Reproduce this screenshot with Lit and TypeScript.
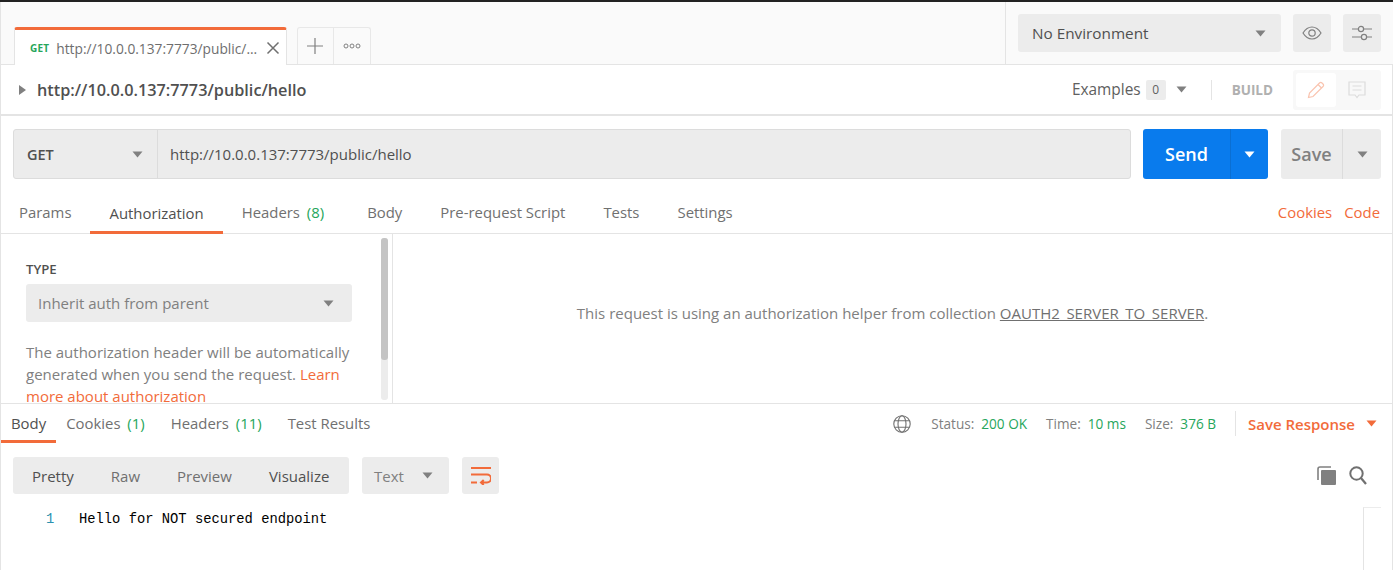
import { LitElement, html, css, svg } from 'lit';
import { customElement } from 'lit/decorators.js';

const caret = (color = '#808080') => html`<svg class="caret" width="11" height="7" viewBox="0 0 11 7"><path d="M0.5 0.5h10L5.5 6.5z" fill=${color}></path></svg>`;

const eyeIcon = svg`<path d="M1 9c2.6-4.2 5.6-6 9-6s6.400 1.800 9 6c-2.600 4.200-5.600 6-9 6s-6.400-1.800-9-6z" fill="none" stroke="#808080" stroke-width="1.200"></path><circle cx="10" cy="9" r="3.200" fill="none" stroke="#808080" stroke-width="1.200"></circle>`;

const slidersIcon = svg`<path d="M0 5h6M12 5h8M0 13h9M15 13h5" stroke="#808080" stroke-width="1.200" fill="none"></path><circle cx="9" cy="5" r="2.600" fill="none" stroke="#808080" stroke-width="1.200"></circle><circle cx="12" cy="13" r="2.600" fill="none" stroke="#808080" stroke-width="1.200"></circle>`;

@customElement('app-root')
export class AppRoot extends LitElement {
  static styles = css`
    :host {
      display: block;
      width: 1393px;
      height: 570px;
      overflow: hidden;
      background: #fff;
      color: #505050;
      font-family: 'Open Sans', sans-serif;
      font-size: 15px;
      box-sizing: border-box;
    }

    * {
      box-sizing: border-box;
    }

    .caret {
      display: block;
      flex: none;
    }

    .topbar {
      height: 2px;
      background: #222;
    }

    .page {
      height: 568px;
      border-left: 1px solid #e4e4e4;
      border-right: 1px solid #e4e4e4;
    }

    /* tab strip */
    .strip {
      display: flex;
      height: 63px;
      margin-right: -1px;
      background: #fafafa;
      border-bottom: 1px solid #e4e4e4;
    }

    .strip-left {
      flex: 1;
      display: flex;
      align-items: flex-end;
      padding-left: 13px;
      margin-bottom: -1px;
    }

    .req-tab {
      display: flex;
      align-items: center;
      width: 273px;
      height: 38px;
      padding: 1px 6px 0 15px;
      background: #fff;
      border: 1px solid #e4e4e4;
      border-top: 3px solid #f26b3a;
      border-bottom: none;
      border-radius: 3px 3px 0 0;
      color: #6e6e6e;
    }

    .req-tab .method {
      font-size: 10px;
      font-weight: 700;
      color: #26a65b;
      margin-right: 7px;
      letter-spacing: 0.2px;
    }

    .req-tab .title {
      font-size: 13.75px;
      flex: 1;
      white-space: nowrap;
    }

    .strip-btns {
      display: flex;
      height: 37px;
      margin-left: 10px;
      margin-bottom: 1px;
      background: #fafafa;
      border: 1px solid #e8e8e8;
      border-bottom: none;
      border-radius: 3px 3px 0 0;
    }

    .strip-btns div {
      width: 35px;
      padding-right: 1px;
      display: flex;
      align-items: center;
      justify-content: center;
    }

    .strip-btns div + div {
      width: 37px;
      padding-right: 0;
      border-left: 1px solid #e8e8e8;
    }

    .env {
      width: 388px;
      flex: none;
      display: flex;
      gap: 12px;
      padding: 12px 11px 0 12px;
      border-left: 1px solid #e4e4e4;
    }

    .env-select {
      width: 263px;
      height: 38px;
      display: flex;
      align-items: center;
      justify-content: space-between;
      padding: 0 15px 0 14px;
      background: #ececec;
      border-radius: 3px;
      font-size: 15.3px;
      font-weight: 500;
      color: #505050;
    }

    .env-btn {
      width: 38px;
      height: 38px;
      display: flex;
      align-items: center;
      justify-content: center;
      background: #ececec;
      border-radius: 3px;
    }

    /* request name row */
    .name-row {
      display: flex;
      align-items: center;
      height: 51px;
      border-bottom: 2px solid #e4e4e4;
      padding: 0 11px 0 18px;
    }

    .name-row .arrow {
      width: 0;
      height: 0;
      border-left: 7px solid #808080;
      border-top: 5px solid transparent;
      border-bottom: 5px solid transparent;
      margin-right: 11px;
    }

    .name-row .name {
      flex: 1;
      font-size: 16.25px;
      font-weight: 600;
      color: #505050;
    }

    .examples {
      display: flex;
      align-items: center;
      font-size: 15.4px;
      font-weight: 500;
      color: #606060;
    }

    .examples .count {
      width: 20px;
      height: 20px;
      margin: 0 10px 0 5px;
      background: #ececec;
      border-radius: 2px;
      font-size: 12px;
      line-height: 20px;
      text-align: center;
    }

    .name-row .sep {
      width: 1px;
      height: 20px;
      background: #e4e4e4;
      margin: 0 20px 0 24px;
    }

    .build {
      font-size: 13.5px;
      font-weight: 700;
      color: #b0b0b0;
      margin-right: 20px;
    }

    .mode {
      display: flex;
      padding: 3px;
      width: 88px;
      height: 40px;
      background: #f8f8f8;
      border-radius: 3px;
    }

    .mode div {
      width: 40px;
      display: flex;
      align-items: center;
      justify-content: center;
      border-radius: 3px;
    }

    .mode div + div {
      width: 42px;
    }

    .mode .on {
      background: #fff;
    }

    /* url bar */
    .url-row {
      display: flex;
      padding: 13px 11px 0 12px;
    }

    .url-group {
      flex: 1;
      height: 50px;
      display: flex;
      background: #ececec;
      border: 1px solid #dcdcdc;
      border-radius: 3px;
    }

    .method-select {
      width: 144px;
      display: flex;
      align-items: center;
      justify-content: space-between;
      padding: 0 14px 0 13px;
      border-right: 1px solid #dcdcdc;
      font-size: 14.5px;
      font-weight: 600;
      color: #505050;
    }

    .url {
      display: flex;
      align-items: center;
      padding-left: 12px;
      color: #505050;
    }

    .send {
      display: flex;
      width: 125px;
      height: 50px;
      margin-left: 12px;
      background: #097bed;
      border-radius: 3px;
      color: #fff;
      font-size: 18px;
      font-weight: 600;
    }

    .save {
      display: flex;
      width: 100px;
      height: 50px;
      margin-left: 13px;
      background: #ececec;
      border-radius: 3px;
      color: #808080;
      font-size: 18px;
      font-weight: 600;
    }

    .split-main {
      flex: 1;
      display: flex;
      align-items: center;
      justify-content: center;
    }

    .split-arrow {
      display: flex;
      align-items: center;
      justify-content: center;
      flex: none;
      width: 38px;
      border-left: 1px solid #0a6fd3;
    }

    .save .split-arrow {
      width: 39px;
      border-left-color: #dcdcdc;
    }

    /* tabs */
    .req-tabs {
      display: flex;
      align-items: flex-end;
      height: 55px;
      margin-left: -1px;
      font-size: 14.9px;
      border-bottom: 1px solid #e4e4e4;
    }

    .tab {
      height: 36px;
      padding: 0 19px;
      color: #707070;
      line-height: 30px;
      white-space: nowrap;
    }

    .tab.active {
      color: #505050;
      border-bottom: 3px solid #f26b3a;
      margin-bottom: -1px;
    }

    .count-green {
      color: #26a65b;
      margin-left: 3px;
    }

    .tab.headers {
      margin-right: 5px;
    }

    .req-tabs .links {
      margin-left: auto;
      display: flex;
      gap: 12px;
      height: 36px;
      line-height: 30px;
      padding-right: 12px;
      color: #f26b3a;
    }

    /* auth pane */
    .auth {
      display: flex;
      height: 170px;
      border-bottom: 1px solid #e4e4e4;
    }

    .auth-left {
      position: relative;
      width: 392px;
      flex: none;
      padding: 27px 39px 0 25px;
      border-right: 1px solid #e4e4e4;
      overflow: hidden;
    }

    .auth-left .type {
      font-size: 13.2px;
      font-weight: 600;
      line-height: 16px;
      color: #505050;
    }

    .auth-select {
      display: flex;
      align-items: center;
      justify-content: space-between;
      width: 326px;
      height: 38px;
      margin-top: 7px;
      padding: 0 18px 0 12px;
      background: #ececec;
      border-radius: 3px;
      color: #808080;
    }

    .auth-left p {
      width: 335px;
      margin: 19px 0 0;
      line-height: 22px;
      color: #808080;
    }

    .link {
      color: #f26b3a;
    }

    .scroll {
      position: absolute;
      top: 4px;
      right: 4px;
      width: 7px;
      height: 162px;
      background: #ececec;
      border-radius: 3px;
    }

    .scroll div {
      height: 122px;
      background: #c4c4c4;
      border-radius: 3px;
    }

    .auth-right {
      flex: 1;
      display: flex;
      align-items: center;
      justify-content: center;
      color: #808080;
      padding: 0 0 12px 0;
    }

    .auth-right u {
      color: #707070;
    }

    /* response */
    .res-head {
      display: flex;
      height: 39px;
      font-size: 14.9px;
    }

    .res-tab {
      height: 39px;
      padding: 0 10px;
      line-height: 39px;
      color: #707070;
      white-space: nowrap;
    }

    .res-tab.active {
      color: #505050;
      border-bottom: 3px solid #f26b3a;
    }

    .res-tab.gap {
      margin-right: 6px;
    }

    .res-meta {
      margin-left: auto;
      display: flex;
      align-items: center;
      height: 39px;
      font-size: 13.6px;
      color: #808080;
      padding-right: 15px;
    }

    .res-meta .val {
      color: #26a65b;
      margin: 0 19px 0 7px;
    }

    .res-meta .globe {
      margin-right: 20px;
    }

    .res-meta .sep {
      width: 1px;
      height: 25px;
      background: #e4e4e4;
      margin-right: 12px;
    }

    .res-meta .save-res {
      font-size: 15px;
      font-weight: 600;
      color: #f26b3a;
      margin-right: 11px;
    }

    .toolbar {
      display: flex;
      align-items: center;
      padding: 14px 12px 0 12px;
    }

    .modes {
      display: flex;
      align-items: center;
      gap: 37px;
      height: 37px;
      padding: 0 18px 0 19px;
      width: 336px;
      background: #ececec;
      border-radius: 3px;
      color: #707070;
    }

    .modes .active {
      color: #505050;
    }

    .text-select {
      display: flex;
      align-items: center;
      justify-content: space-between;
      width: 87px;
      height: 37px;
      margin-left: 13px;
      padding: 0 16px 0 12px;
      background: #ececec;
      border-radius: 3px;
      color: #808080;
    }

    .wrap {
      display: flex;
      align-items: center;
      justify-content: center;
      width: 37px;
      height: 37px;
      margin-left: 13px;
      background: #ececec;
      border-radius: 3px;
    }

    .tools {
      margin-left: auto;
      display: flex;
      gap: 13px;
      padding-right: 13px;
    }

    .editor {
      display: flex;
      padding-top: 13px;
      font-family: 'Liberation Mono', monospace;
      font-size: 13.8px;
      line-height: 22px;
      color: #000;
    }

    .editor .ln {
      width: 78px;
      padding: 2px 0 0 45px;
      color: #2b91af;
      flex: none;
    }

    .editor .code {
      padding-top: 2px;
    }

    .editor .gutter {
      margin-left: auto;
      margin-right: 11px;
      width: 18px;
      height: 70px;
      border-left: 1px solid #e4e4e4;
      border-top: 1px solid #ececec;
    }
  `;

  render() {
    return html`
      <div class="topbar"></div>
      <div class="page">
        <div class="strip">
          <div class="strip-left">
            <div class="req-tab">
              <span class="method">GET</span>
              <span class="title">http://10.0.0.137:7773/public/...</span>
              <svg width="14" height="14" viewBox="0 0 14 14"><path d="M1.500 1.500l11 11M12.500 1.500l-11 11" stroke="#707070" stroke-width="1.500" fill="none"></path></svg>
            </div>
            <div class="strip-btns">
              <div><svg width="16" height="16" viewBox="0 0 16 16"><path d="M8 0v16M0 8h16" stroke="#808080" stroke-width="1.200" fill="none"></path></svg></div>
              <div><svg width="18" height="6" viewBox="0 0 18 6"><g fill="none" stroke="#808080"><circle cx="3" cy="3" r="2"></circle><circle cx="9" cy="3" r="2"></circle><circle cx="15" cy="3" r="2"></circle></g></svg></div>
            </div>
          </div>
          <div class="env">
            <div class="env-select"><span>No Environment</span>${caret()}</div>
            <div class="env-btn"><svg width="20" height="18" viewBox="0 0 20 18">${eyeIcon}</svg></div>
            <div class="env-btn"><svg width="20" height="18" viewBox="0 0 20 18">${slidersIcon}</svg></div>
          </div>
        </div>

        <div class="name-row">
          <div class="arrow"></div>
          <div class="name">http://10.0.0.137:7773/public/hello</div>
          <div class="examples"><span>Examples</span><span class="count">0</span>${caret()}</div>
          <div class="sep"></div>
          <div class="build">BUILD</div>
          <div class="mode">
            <div class="on"><svg width="18" height="18" viewBox="0 0 18 18"><path d="M1.500 16.500l1-4.500L12.500 2a1.800 1.800 0 0 1 2.500 0l1 1a1.800 1.800 0 0 1 0 2.500L6 15.500zM11 3.500l3.500 3.500" fill="none" stroke="#f9c4b0" stroke-width="1.200"></path></svg></div>
            <div><svg width="18" height="18" viewBox="0 0 18 18"><path d="M1 1h16v13h-6l-2 2.500L7 14H1zM4.500 5h9M4.500 9h9" fill="none" stroke="#dcdcdc" stroke-width="1.200"></path></svg></div>
          </div>
        </div>

        <div class="url-row">
          <div class="url-group">
            <div class="method-select"><span>GET</span>${caret()}</div>
            <div class="url">http://10.0.0.137:7773/public/hello</div>
          </div>
          <div class="send">
            <div class="split-main">Send</div>
            <div class="split-arrow">${caret('#fff')}</div>
          </div>
          <div class="save">
            <div class="split-main">Save</div>
            <div class="split-arrow">${caret()}</div>
          </div>
        </div>

        <div class="req-tabs">
          <div class="tab">Params</div>
          <div class="tab active">Authorization</div>
          <div class="tab headers">Headers <span class="count-green">(8)</span></div>
          <div class="tab">Body</div>
          <div class="tab">Pre-request Script</div>
          <div class="tab">Tests</div>
          <div class="tab">Settings</div>
          <div class="links"><span>Cookies</span><span>Code</span></div>
        </div>

        <div class="auth">
          <div class="auth-left">
            <div class="type">TYPE</div>
            <div class="auth-select"><span>Inherit auth from parent</span>${caret()}</div>
            <p>The authorization header will be automatically generated when you send the request. <span class="link">Learn more about authorization</span></p>
            <div class="scroll"><div></div></div>
          </div>
          <div class="auth-right">
            <span>This request is using an authorization helper from collection <u>OAUTH2_SERVER_TO_SERVER</u>.</span>
          </div>
        </div>

        <div class="res-head">
          <div class="res-tab active">Body</div>
          <div class="res-tab gap">Cookies <span class="count-green">(1)</span></div>
          <div class="res-tab gap">Headers <span class="count-green">(11)</span></div>
          <div class="res-tab">Test Results</div>
          <div class="res-meta">
            <svg class="globe" width="18" height="18" viewBox="0 0 18 18"><g fill="none" stroke="#707070" stroke-width="1.100"><circle cx="9" cy="9" r="8.200"></circle><ellipse cx="9" cy="9" rx="4" ry="8.200"></ellipse><path d="M1.500 5.800h15M1.500 12.200h15"></path></g></svg>
            <span>Status:</span><span class="val">200 OK</span>
            <span>Time:</span><span class="val">10 ms</span>
            <span>Size:</span><span class="val">376 B</span>
            <div class="sep"></div>
            <span class="save-res">Save Response</span>
            ${caret('#f26b3a')}
          </div>
        </div>

        <div class="toolbar">
          <div class="modes">
            <span class="active">Pretty</span><span>Raw</span><span>Preview</span><span class="active">Visualize</span>
          </div>
          <div class="text-select"><span>Text</span>${caret()}</div>
          <div class="wrap"><svg width="20" height="18" viewBox="0 0 20 18"><path d="M0 1h20M0 7.500h16a4 4 0 0 1 0 8h-6M12.700 13l-2.700 2.500 2.700 2.500M0 15.500h6" fill="none" stroke="#f26b3a" stroke-width="2"></path></svg></div>
          <div class="tools">
            <svg width="19" height="19" viewBox="0 0 19 19"><path d="M1 14V3a2 2 0 0 1 2-2h11" fill="none" stroke="#808080" stroke-width="1.600"></path><rect x="4" y="4" width="15" height="15" rx="1" fill="#808080"></rect></svg>
            <svg width="18" height="19" viewBox="0 0 18 19"><circle cx="7.500" cy="7.500" r="6.200" fill="none" stroke="#707070" stroke-width="2"></circle><path d="M12 12l5 6" stroke="#707070" stroke-width="2.200" fill="none"></path></svg>
          </div>
        </div>

        <div class="editor">
          <div class="ln">1</div>
          <div class="code">Hello for NOT secured endpoint</div>
          <div class="gutter"></div>
        </div>
      </div>
    `;
  }
}
